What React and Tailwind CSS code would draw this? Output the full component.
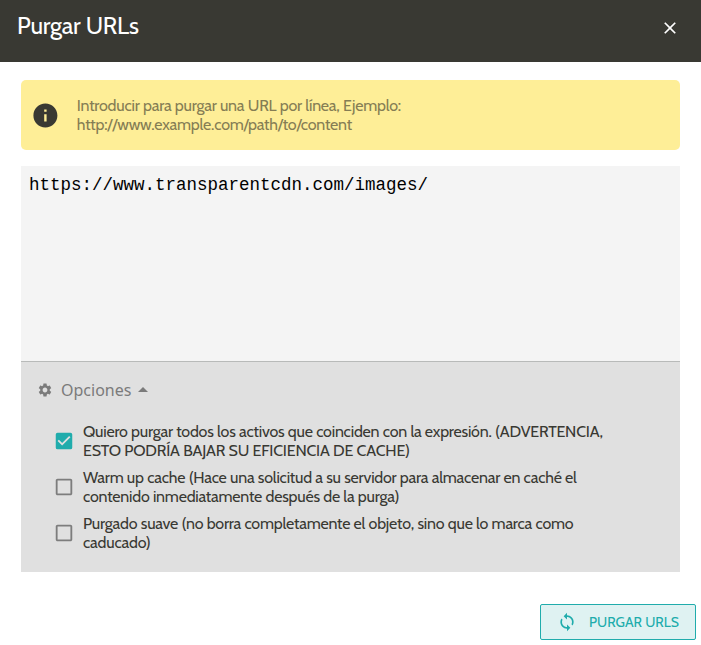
import {
  MdArrowDropUp,
  MdCheckBox,
  MdCheckBoxOutlineBlank,
  MdClose,
  MdInfo,
  MdLoop,
  MdSettings,
} from "react-icons/md";

const options = [
  {
    checked: true,
    lines: [
      { text: "Quiero purgar todos los activos que coinciden con la expresión. (ADVERTENCIA,", spacing: "tracking-[-0.2px]" },
      { text: "ESTO PODRÍA BAJAR SU EFICIENCIA DE CACHE)", spacing: "tracking-[-0.2px]" },
    ],
  },
  {
    checked: false,
    lines: [
      { text: "Warm up cache (Hace una solicitud a su servidor para almacenar en caché el", spacing: "tracking-[-0.2px]" },
      { text: "contenido inmediatamente después de la purga)", spacing: "tracking-[-0.2px]" },
    ],
  },
  {
    checked: false,
    lines: [
      { text: "Purgado suave (no borra completamente el objeto, sino que lo marca como", spacing: "tracking-[-0.2px]" },
      { text: "caducado)", spacing: "tracking-[-0.2px]" },
    ],
  },
];

function Option({ checked, lines }) {
  return (
    <label className="flex h-[38px] items-center">
      {checked ? (
        <MdCheckBox className="size-[22px] shrink-0 text-[#20acac]" />
      ) : (
        <MdCheckBoxOutlineBlank className="size-[22px] shrink-0 text-[#7d7d7d]" />
      )}
      <span className="ml-[8px] text-[16px] leading-[19px] whitespace-nowrap text-[#393933]">
        {lines.map((line) => (
          <span key={line.text} className={`block ${line.spacing}`}>
            {line.text}
          </span>
        ))}
      </span>
    </label>
  );
}

export default function App() {
  return (
    <div className="flex h-[645px] w-[701px] flex-col overflow-hidden bg-white font-['Cabin','Lato',sans-serif]">
      <header className="flex h-[62px] shrink-0 items-start justify-between bg-[#393933] pt-[11px] pr-[21px] pl-[17px] text-white">
        <h1 className="text-[24px] leading-[30px] tracking-[-0.2px]">Purgar URLs</h1>
        <button aria-label="Cerrar" className="mt-[7px]">
          <MdClose className="size-[20px]" />
        </button>
      </header>

      <main className="flex flex-col px-[21px] pt-[18px]">
        <div className="flex h-[70px] items-center rounded-[5px] bg-[#feee97] pl-[10px]">
          <MdInfo className="size-[28.8px] shrink-0 text-[#393933]" />
          <p className="ml-[17px] text-[16px] leading-[19px] whitespace-nowrap text-[#857d54]">
            <span className="block tracking-[-0.2px]">Introducir para purgar una URL por línea, Ejemplo:</span>
            <span className="block tracking-[-0.2px]">http://www.example.com/path/to/content</span>
          </p>
        </div>

        <div className="mt-[16px] h-[196px] border-b border-[#b8bab9] bg-[#f4f4f4] px-[8px] pt-[9px] font-['Liberation_Mono',monospace] text-[17.5px] leading-[20px] text-black">
          https://www.transparentcdn.com/images/
        </div>

        <section className="h-[210px] bg-[#e0e0e0] pt-[18px] pl-[16px]">
          <div className="flex h-[20px] items-center text-[#7b7b7b]">
            <MdSettings className="size-[16px]" />
            <span className="ml-[8px] font-['Noto_Sans',sans-serif] text-[16px] leading-[20px]">Opciones</span>
            <MdArrowDropUp className="size-[24px]" />
          </div>
          <div className="mt-[22px] flex flex-col gap-[8px] pl-[16px]">
            {options.map((option) => (
              <Option key={option.lines[0].text} {...option} />
            ))}
          </div>
        </section>
      </main>

      <footer className="mt-[32px] flex justify-end pr-[5px]">
        <button className="flex h-[36px] w-[156px] items-center rounded-[2px] border border-[#20acac] bg-[#dff2f2] pl-[16px] text-[#20acac]">
          <MdLoop className="size-[20px]" />
          <span className="ml-[12px] text-[14px] leading-[18px] whitespace-nowrap">PURGAR URLS</span>
        </button>
      </footer>
    </div>
  );
}
